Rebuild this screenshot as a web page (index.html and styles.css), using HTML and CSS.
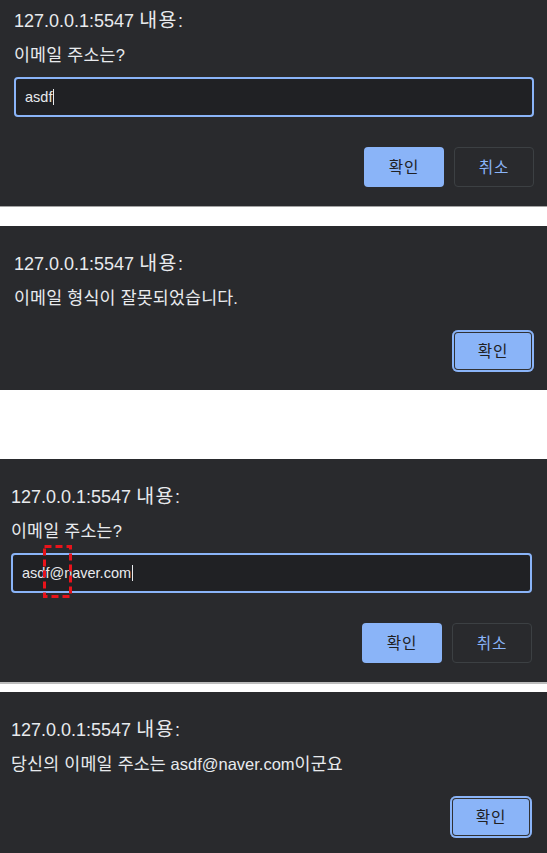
FILE: index.html
```html
<!DOCTYPE html>
<html lang="ko">
<head>
<meta charset="utf-8">
<title>Dialogs</title>
<link rel="stylesheet" href="styles.css">
</head>
<body>
<section class="dialog dialog--cropped dialog--edge1">
  <h1 class="dialog__title">127.0.0.1:5547 <span class="ko">내용</span>:</h1>
  <p class="dialog__message"><span class="ko">이메일 주소는</span>?</p>
  <div class="dialog__input"><span class="dialog__value">asdf</span><span class="caret"></span></div>
  <div class="dialog__actions">
    <button class="btn btn--primary"><span class="ko">확인</span></button>
    <button class="btn btn--secondary"><span class="ko">취소</span></button>
  </div>
</section>

<section class="dialog dialog--alert dialog--gap">
  <h1 class="dialog__title">127.0.0.1:5547 <span class="ko">내용</span>:</h1>
  <p class="dialog__message"><span class="ko">이메일 형식이 잘못되었습니다</span>.</p>
  <div class="dialog__actions dialog__actions--alert">
    <button class="btn btn--primary btn--focused"><span class="ko">확인</span></button>
  </div>
</section>

<section class="dialog dialog--left dialog--edge2">
  <h1 class="dialog__title">127.0.0.1:5547 <span class="ko">내용</span>:</h1>
  <p class="dialog__message"><span class="ko">이메일 주소는</span>?</p>
  <div class="dialog__input">
    <span class="dialog__value">asdf@naver.com</span><span class="caret"></span>
    <svg class="marker" width="29" height="53" viewBox="0 0 29 53" aria-hidden="true">
      <rect x="1.5" y="1.5" width="26" height="50" fill="none" stroke="#e8131b" stroke-width="3" stroke-dasharray="7 4"/>
    </svg>
  </div>
  <div class="dialog__actions">
    <button class="btn btn--primary"><span class="ko">확인</span></button>
    <button class="btn btn--secondary"><span class="ko">취소</span></button>
  </div>
</section>

<section class="dialog dialog--alert dialog--left dialog--last">
  <h1 class="dialog__title">127.0.0.1:5547 <span class="ko">내용</span>:</h1>
  <p class="dialog__message"><span class="ko">당신의 이메일 주소는</span> asdf@naver.com<span class="ko">이군요</span></p>
  <div class="dialog__actions dialog__actions--alert">
    <button class="btn btn--primary btn--focused"><span class="ko">확인</span></button>
  </div>
</section>
</body>
</html>
```

FILE: styles.css
```css
* {
  box-sizing: border-box;
}

html,
body {
  margin: 0;
  padding: 0;
}

body {
  width: 547px;
  background: #ffffff;
  font-family: "Liberation Sans", "Noto Sans CJK KR", sans-serif;
  color: #e8eaed;
}

.ko {
  font-family: "Noto Sans CJK KR", "Liberation Sans", sans-serif;
  font-size: 1.05em;
  line-height: 0.9;
  letter-spacing: 0.01em;
}

.dialog {
  background: #292a2d;
  padding: 26px 13px 19px 14px;
}

.dialog--left {
  padding-left: 11px;
  padding-right: 15px;
}

.dialog--cropped {
  padding-top: 9px;
}

.dialog--edge1 {
  border-bottom: 1px solid #a3a3a3;
  margin-bottom: 19px;
}

.dialog--alert {
  padding-bottom: 18px;
}

.dialog--gap {
  margin-bottom: 69px;
}

.dialog--edge2 {
  border-bottom: 2px solid #bcbcbc;
  margin-bottom: 8px;
}

.dialog--last {
  padding-bottom: 15px;
}

.dialog__title {
  margin: 0;
  font-size: 18px;
  line-height: 24px;
  font-weight: 400;
}

.dialog__title .ko {
  font-size: 1.08em;
  letter-spacing: 0.08em;
}

.dialog__message {
  margin: 12px 0 0;
  font-size: 16.5px;
  line-height: 20px;
}

.dialog__input {
  position: relative;
  display: flex;
  align-items: center;
  margin-top: 12px;
  height: 40px;
  border: 2px solid #8ab4f8;
  border-radius: 4px;
  background: #202124;
  padding-left: 9px;
  font-size: 14.5px;
}

.caret {
  width: 1px;
  height: 16px;
  margin-left: 1px;
  background: #e8eaed;
}

.marker {
  position: absolute;
  left: 30px;
  top: -10px;
}

.dialog__actions {
  display: flex;
  justify-content: flex-end;
  gap: 10px;
  margin-top: 30px;
}

.dialog__actions--alert {
  margin-top: 22px;
}

.btn {
  display: flex;
  align-items: center;
  justify-content: center;
  width: 80px;
  height: 40px;
  padding: 0;
  border-radius: 4px;
  font-family: "Liberation Sans", "Noto Sans CJK KR", sans-serif;
  font-size: 14.5px;
}

.btn .ko {
  font-size: 1.08em;
  letter-spacing: 0.06em;
}

.btn--primary {
  background: #8ab4f8;
  color: #202124;
  border: none;
}

.btn--secondary {
  background: transparent;
  border: 1px solid #3c4043;
  color: #8ab4f8;
}

.btn--focused {
  width: 82px;
  height: 42px;
  border-radius: 6px;
  box-shadow: inset 0 0 0 2px #8ab4f8, inset 0 0 0 3px #303134;
}
```
